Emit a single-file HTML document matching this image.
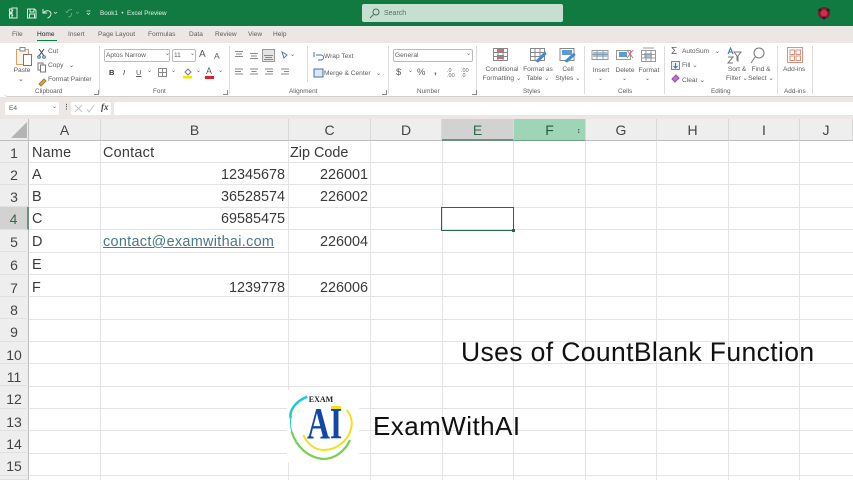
<!DOCTYPE html>
<html><head><meta charset="utf-8">
<style>
html,body{margin:0;padding:0;width:853px;height:480px;overflow:hidden;background:#fff}
body{position:relative;font-family:"Liberation Sans",sans-serif}
.a{position:absolute}
.t{position:absolute;white-space:nowrap;font-size:7px;line-height:9px;color:#5c5c5c}
.c{text-align:center}
.v{position:absolute;top:141px;bottom:0;width:1px;background:#e4e4e4}
.h{position:absolute;left:29px;right:0;height:1px;background:#e4e4e4}
.ch{position:absolute;top:119px;height:22px;line-height:22px;text-align:center;font-size:14px;color:#444;background:#eeeeee;border-right:1px solid #d8d8d8;box-sizing:border-box;border-bottom:1px solid #bdbdbd}
.rh{position:absolute;left:0;width:29px;text-align:center;font-size:14px;color:#444;background:#eeeeee;box-sizing:border-box;border-bottom:1px solid #e0e0e0;border-right:1px solid #bdbdbd;padding-top:1px}
.l{padding-top:2px}
.d{position:absolute;font-size:14.4px;line-height:22px;color:#3a3a3a;white-space:nowrap;margin-top:1px}
.r{text-align:right}
.sp{letter-spacing:.25px}
.sep{position:absolute;top:46px;height:48px;width:1px;background:#dedcda}
svg{position:absolute;overflow:visible}
</style></head><body>
<!-- title bar -->
<div class="a" style="left:0;top:0;width:853px;height:26px;background:#117a41"></div>
<div class="a" style="left:0;top:26px;width:853px;height:17px;background:#ece7e5"></div>
<div class="a" style="left:0;top:97px;width:853px;height:22px;background:#ece7e5"></div>
<svg style="left:0;top:0" width="110" height="26" fill="none" stroke="#dcefe4" stroke-width="1">
<rect x="9.500" y="9" width="7" height="9" fill="none"/><rect x="12" y="8" width="5" height="10" fill="#117a41"/><path d="M9 10l4 6M13 10l-4 6"/>
<path d="M27.500 9h7l1.500 1.500v7.500h-8.500zM30 9v3h4V9M29.500 18v-4h5v4"/>
<path d="M43 9v4h4M43.500 13c2-3 7-3 7.500 0.500 0 2.500-2 4-3.500 4.500"/>
<path d="M54 12l1.500 1.500L57 12" stroke-width=".7"/>
<path d="M72 9.500c-3 0-4.500 1-5 3l-1.500-1M68 17c3 0 4-2 3.500-4" opacity=".4"/>
<path d="M76 12l1.500 1.500L79 12" stroke-width=".7" opacity=".4"/>
<path d="M86.500 11h4M87 13l1.500 1.500L90 13" stroke-width=".8"/>
</svg>
<div class="t" style="left:100px;top:9px;color:#e4f1ea;font-size:6.300px">Book1 &nbsp;•&nbsp; Excel Preview</div>
<div class="a" style="left:362px;top:4px;width:201px;height:18px;background:#c6dfd1;border-radius:2px"></div>
<svg style="left:368px;top:7px" width="14" height="12" fill="none" stroke="#4b6f5b"><circle cx="8" cy="5" r="3"/><path d="M5.500 7.500L2 11"/></svg>
<div class="t" style="left:384px;top:9px;color:#54705f;font-size:7px">Search</div>
<svg style="left:816px;top:5px" width="16" height="16"><circle cx="8" cy="8" r="6" fill="#7d1a2f"/><circle cx="8" cy="8" r="3.500" fill="#d8284c"/><circle cx="4" cy="5" r="1.500" fill="#222"/><circle cx="12" cy="5" r="1.500" fill="#222"/><circle cx="8" cy="13" r="1.500" fill="#222"/></svg>
<!-- tabs -->
<div class="t" style="left:12px;top:30px;font-size:6.600px">File</div>
<div class="t" style="left:37px;top:30px;font-size:6.600px;color:#222">Home</div>
<div class="a" style="left:37px;top:40px;width:20px;height:1px;background:#117a41"></div>
<div class="t" style="left:68px;top:30px;font-size:6.600px">Insert</div>
<div class="t" style="left:98px;top:30px;font-size:6.600px">Page Layout</div>
<div class="t" style="left:148px;top:30px;font-size:6.600px">Formulas</div>
<div class="t" style="left:189px;top:30px;font-size:6.600px">Data</div>
<div class="t" style="left:215px;top:30px;font-size:6.600px">Review</div>
<div class="t" style="left:248px;top:30px;font-size:6.600px">View</div>
<div class="t" style="left:273px;top:30px;font-size:6.600px">Help</div>
<!-- ribbon -->
<div class="a" style="left:4px;top:43px;width:849px;height:54px;background:#fff;border-radius:4px 0 0 4px;border-bottom:1px solid #d2cfcd;box-sizing:border-box"></div>
<div class="sep" style="left:99px"></div><div class="sep" style="left:229px"></div><div class="sep" style="left:388px"></div><div class="sep" style="left:476px"></div><div class="sep" style="left:584px"></div><div class="sep" style="left:664px"></div><div class="sep" style="left:777px"></div><div class="sep" style="left:812px"></div>
<!-- clipboard -->
<svg style="left:14px;top:46px" width="20" height="22" fill="none"><rect x="2.500" y="3.500" width="12" height="15" stroke="#d9a066" fill="#fbf2e8"/><rect x="6" y="1.500" width="5" height="3.500" stroke="#888" fill="#fff"/><rect x="9.500" y="8.500" width="8" height="11" stroke="#777" fill="#fff"/></svg>
<div class="t c" style="left:12px;top:66px;width:20px;font-size:6.600px">Paste</div>
<div class="t" style="left:18px;top:75px">⌄</div>
<svg style="left:37px;top:47px" width="12" height="50" fill="none" stroke="#777"><path d="M2 2l5 7M7 2L2 9" stroke="#444"/><circle cx="2" cy="10" r="1.300" stroke="#3c6fb0"/><circle cx="7" cy="10" r="1.300" stroke="#3c6fb0"/><rect x="1" y="16" width="5" height="7"/><rect x="3.500" y="18" width="5" height="7" fill="#fff"/><path d="M2 37l5-5 2 2-5 5z" fill="#e0a04a" stroke="#a97c3a"/></svg>
<div class="t" style="left:48px;top:47px;font-size:6.600px">Cut</div>
<div class="t" style="left:48px;top:61px;font-size:6.600px">Copy &nbsp;&nbsp;⌄</div>
<div class="t" style="left:48px;top:75px;font-size:6.600px">Format Painter</div>
<div class="t" style="left:35px;top:87px;font-size:6.400px">Clipboard</div>
<div class="a" style="left:94px;top:90px;width:4px;height:4px;border:1px solid #888;border-width:0 1px 1px 0"></div>
<!-- font -->
<div class="a" style="left:104px;top:49px;width:66px;height:13px;border:1px solid #bbb;border-radius:2px;box-sizing:border-box"></div>
<div class="t" style="left:106px;top:51px;font-size:6.600px">Aptos Narrow</div>
<div class="t" style="left:165px;top:50px;font-size:6px">⌄</div>
<div class="a" style="left:172px;top:49px;width:24px;height:13px;border:1px solid #bbb;border-radius:2px;box-sizing:border-box"></div>
<div class="t" style="left:174px;top:51px;font-size:6.600px">11</div>
<div class="t" style="left:190px;top:50px;font-size:6px">⌄</div>
<div class="t" style="left:199px;top:49px;font-size:10px;line-height:12px">A</div><div class="t" style="left:214px;top:50px;font-size:8.500px;line-height:12px">A</div>
<div class="t" style="left:109px;top:68px;font-size:7.500px;font-weight:bold;color:#333">B</div>
<div class="t" style="left:123px;top:68px;font-size:7.500px;font-style:italic;color:#333">I</div>
<div class="t" style="left:136px;top:68px;font-size:7.500px;text-decoration:underline">U</div>
<div class="t" style="left:147px;top:67px;font-size:6px">⌄</div>
<svg style="left:158px;top:68px" width="10" height="10" fill="none" stroke="#888"><rect x=".5" y=".5" width="8" height="8"/><path d="M4.500 0v9M0 4.500h9"/></svg>
<div class="t" style="left:171px;top:67px;font-size:6px">⌄</div>
<svg style="left:183px;top:67px" width="10" height="12" fill="none"><path d="M2 5l3-3 3 3-3 3z" stroke="#777"/><rect x="0" y="9" width="9" height="2.500" fill="#ffe000"/></svg>
<div class="t" style="left:196px;top:67px;font-size:6px">⌄</div>
<div class="t" style="left:206px;top:66px;font-size:9px;line-height:10px">A</div><div class="a" style="left:205px;top:76px;width:9px;height:2.500px;background:#e0202a"></div>
<div class="t" style="left:218px;top:67px;font-size:6px">⌄</div>
<div class="t" style="left:153px;top:87px;font-size:6.400px">Font</div>
<div class="a" style="left:223px;top:90px;width:4px;height:4px;border:1px solid #888;border-width:0 1px 1px 0"></div>
<!-- alignment -->
<svg style="left:234px;top:49px" width="75" height="30" fill="none" stroke="#888" stroke-width="1">
<path d="M1 2.500h8M2 5h6M1 7.500h8M16 4.500h8M17 7h6M16 9.500h8"/>
<rect x="28.500" y="0.500" width="12" height="12" fill="#e4e4e4" stroke="#999"/><path d="M30 6.500h9M31 8.500h7M30 10.500h9"/>
<path d="M1 20h8M1 22.500h6M1 25h8M16 20h8M17.500 22.500h5M16 25h8M31 20h8M33 22.500h6M31 25h8M47 20h8M50 22.500h5M47 25h8" />
<path d="M48 3l5 3 -3 3z" stroke="#4a7ab5"/>
</svg>
<div class="t" style="left:290px;top:51px;font-size:6px">⌄</div>
<div class="a" style="left:307px;top:46px;width:1px;height:36px;background:#dedcda"></div>
<svg style="left:313px;top:51px" width="12" height="28" fill="none" stroke="#777"><path d="M1 1v5M3 4h5a2 2 0 010 5H5" stroke="#3c6fb0"/><rect x="1" y="18" width="9" height="8" stroke="#3c6fb0" fill="#dce8f5"/></svg>
<div class="t" style="left:324px;top:52px;font-size:6.600px">Wrap Text</div>
<div class="t" style="left:324px;top:69px;font-size:6.600px">Merge &amp; Center &nbsp;&nbsp;⌄</div>
<div class="t" style="left:289px;top:87px;font-size:6.400px">Alignment</div>
<div class="a" style="left:382px;top:90px;width:4px;height:4px;border:1px solid #888;border-width:0 1px 1px 0"></div>
<!-- number -->
<div class="a" style="left:393px;top:49px;width:80px;height:13px;border:1px solid #bbb;border-radius:2px;box-sizing:border-box"></div>
<div class="t" style="left:395px;top:51px;font-size:6.600px">General</div>
<div class="t" style="left:466px;top:50px;font-size:6px">⌄</div>
<div class="t" style="left:396px;top:67px;font-size:9.500px;line-height:11px">$</div>
<div class="t" style="left:408px;top:67px;font-size:6px">⌄</div>
<div class="t" style="left:417px;top:67px;font-size:9.500px;line-height:11px">%</div>
<div class="t" style="left:434px;top:66px;font-size:10px;line-height:11px;font-weight:bold">,</div>
<div class="t" style="left:447px;top:69px;font-size:5.500px;line-height:5px;color:#666">.0<br>.00</div>
<div class="t" style="left:461px;top:69px;font-size:5.500px;line-height:5px;color:#666">.00<br>.0</div>
<div class="t" style="left:417px;top:87px;font-size:6.400px">Number</div>
<div class="a" style="left:472px;top:90px;width:4px;height:4px;border:1px solid #888;border-width:0 1px 1px 0"></div>
<!-- styles -->
<svg style="left:493px;top:48px" width="85" height="16" fill="none" stroke="#888">
<rect x=".5" y=".5" width="14" height="12"/><rect x="4" y="1" width="7" height="4" fill="#e8606a" stroke="none"/><rect x="4" y="7" width="7" height="4" fill="#e8606a" stroke="none"/><path d="M.5 4.500h14M.5 8.500h14M5 .5v12M10 .5v12"/>
<rect x="37.500" y=".5" width="14" height="12"/><path d="M37.500 4.500h14M37.500 8.500h14M42 .5v12M47 .5v12"/><path d="M43 13l9-9 1 2-8 8z" fill="#4a8ad4" stroke="#4a8ad4"/>
<rect x="67" y=".5" width="14" height="12"/><rect x="69" y="2" width="10" height="5" fill="#5b9bd5" stroke="none"/><path d="M72 13l9-8 1 2-8 7z" fill="#4a8ad4" stroke="#4a8ad4"/>
</svg>
<div class="t c" style="left:480px;top:65px;width:44px;font-size:6.600px;line-height:9px">Conditional<br>Formatting ⌄</div>
<div class="t c" style="left:521px;top:65px;width:34px;font-size:6.600px;line-height:9px">Format as<br>Table ⌄</div>
<div class="t c" style="left:553px;top:65px;width:30px;font-size:6.600px;line-height:9px">Cell<br>Styles ⌄</div>
<div class="t" style="left:523px;top:87px;font-size:6.400px">Styles</div>
<!-- cells -->
<svg style="left:591px;top:47px" width="68" height="16" fill="none" stroke="#999">
<rect x="1" y="3.500" width="16" height="9"/><rect x="2" y="5" width="15" height="5" fill="#9cc3ea" stroke="none"/><path d="M1 7.500h16M6 3.500v9M12 3.500v9"/>
<rect x="25.500" y="3.500" width="14" height="9"/><rect x="28" y="5" width="8" height="5" fill="#5b9bd5" stroke="none"/><path d="M36 3l6 8M42 3l-6 8" stroke="#e0606a"/>
<rect x="50.500" y="3.500" width="14" height="11"/><rect x="53" y="6" width="8" height="5" fill="#9cc3ea" stroke="none"/><path d="M50.500 7.500h14M50.500 11h14M55 3.500v11M60 3.500v11M52 1h11"/>
</svg>
<div class="t c" style="left:590px;top:66px;width:22px;font-size:6.600px">Insert</div><div class="t" style="left:598px;top:75px;font-size:6px">⌄</div>
<div class="t c" style="left:614px;top:66px;width:22px;font-size:6.600px">Delete</div><div class="t" style="left:622px;top:75px;font-size:6px">⌄</div>
<div class="t c" style="left:637px;top:66px;width:24px;font-size:6.600px">Format</div><div class="t" style="left:645px;top:75px;font-size:6px">⌄</div>
<div class="t" style="left:618px;top:87px;font-size:6.400px">Cells</div>
<!-- editing -->
<div class="t" style="left:671px;top:46px;font-size:10px;line-height:11px">Σ</div>
<div class="t" style="left:682px;top:47px;font-size:6.600px">AutoSum &nbsp;&nbsp;⌄</div>
<svg style="left:671px;top:61px" width="12" height="26" fill="none"><rect x=".5" y=".5" width="8" height="8" stroke="#888" fill="#e8f1fa"/><path d="M4.500 2v5M2.500 5l2 2 2-2" stroke="#3c6fb0"/><path d="M1 18l4-4 3 3-4 4z" fill="#c56fd0" stroke="#9a4aa8"/></svg>
<div class="t" style="left:682px;top:61px;font-size:6.600px">Fill ⌄</div>
<div class="t" style="left:682px;top:76px;font-size:6.600px">Clear ⌄</div>
<svg style="left:727px;top:47px" width="45" height="18" fill="none" stroke="#777"><path d="M1 7l2.500-6L6 7M2 5h3" stroke="#3c6fb0"/><path d="M1 10h5l-5 6h5M7 5h7l-3 4v5l-1-1V9z"/><circle cx="32" cy="6" r="5"/><path d="M28 10l-4 6"/></svg>
<div class="t c" style="left:723px;top:65px;width:28px;font-size:6.600px;line-height:9px">Sort &amp;<br>Filter ⌄</div>
<div class="t c" style="left:747px;top:65px;width:28px;font-size:6.600px;line-height:9px">Find &amp;<br>Select ⌄</div>
<div class="t" style="left:711px;top:87px;font-size:6.400px">Editing</div>
<!-- addins -->
<svg style="left:787px;top:47px" width="17" height="17" fill="none" stroke="#d9937f"><rect x=".5" y=".5" width="15" height="15"/><rect x="3" y="3" width="4.500" height="4.500"/><rect x="9" y="3" width="4.500" height="4.500"/><rect x="3" y="9" width="4.500" height="4.500"/><rect x="9" y="9" width="4.500" height="4.500"/></svg>
<div class="t" style="left:783px;top:65px;font-size:6.600px">Add-ins</div>
<div class="t" style="left:784px;top:87px;font-size:6.400px">Add-ins</div>
<!-- formula bar -->
<div class="a" style="left:5px;top:102px;width:54px;height:13px;background:#fff;border-radius:2px"></div>
<div class="t" style="left:9px;top:104px;font-size:6.600px">E4</div>
<div class="t" style="left:52px;top:103px;font-size:6px">⌄</div>
<div class="t" style="left:63px;top:103px;font-size:7px;font-weight:bold">⋮</div>
<div class="a" style="left:71px;top:102px;width:40px;height:13px;background:#fff;border-radius:2px"></div>
<svg style="left:74px;top:104px" width="22" height="9" fill="none" stroke="#c4c4c4"><path d="M1 1l7 7M8 1L1 8M13 5l2 3 5-7"/></svg>
<div class="t" style="left:101px;top:103px;font-size:9px;font-family:'Liberation Serif',serif;font-style:italic;font-weight:bold;color:#444">fx</div>
<div class="a" style="left:114px;top:102px;width:739px;height:13px;background:#fff;border-radius:2px 0 0 2px"></div>
<!-- headers -->
<div class="a" style="left:0;top:119px;width:29px;height:22px;background:#eeeeee;border-right:1px solid #bdbdbd;border-bottom:1px solid #bdbdbd;box-sizing:border-box"></div>
<svg style="left:11px;top:122px" width="17" height="17"><path d="M16 0v16H0z" fill="#b4b4b4"/></svg>
<div class="ch" style="left:29px;width:72px">A</div>
<div class="ch" style="left:101px;width:188px">B</div>
<div class="ch" style="left:289px;width:82px">C</div>
<div class="ch" style="left:371px;width:71px">D</div>
<div class="ch" style="left:442px;width:72px;background:#d2d2d2;color:#2e6b4a;border-bottom:2px solid #6f8f7e">E</div>
<div class="ch" style="left:514px;width:72px;background:#9fd5b7;color:#245c3d;border-bottom:1px solid #6f9f85">F</div>
<div class="t" style="left:577px;top:127px;font-size:7px;font-weight:bold;color:#222">↕</div>
<div class="ch" style="left:586px;width:71px">G</div>
<div class="ch" style="left:657px;width:72px">H</div>
<div class="ch" style="left:729px;width:71px">I</div>
<div class="ch" style="left:800px;width:53px">J</div>
<div class="rh" style="top:141px;height:22px;line-height:22px">1</div>
<div class="rh" style="top:163px;height:22px;line-height:22px">2</div>
<div class="rh" style="top:185px;height:22px;line-height:22px">3</div>
<div class="rh" style="top:207px;height:23px;line-height:23px;background:#d2d2d2;color:#2e6b4a;border-right:2px solid #6f8f7e">4</div>
<div class="rh" style="top:230px;height:22px;line-height:22px">5</div>
<div class="rh l" style="top:252px;height:23px;line-height:23px">6</div>
<div class="rh l" style="top:275px;height:22px;line-height:22px">7</div>
<div class="rh l" style="top:297px;height:22px;line-height:22px">8</div>
<div class="rh l" style="top:319px;height:23px;line-height:23px">9</div>
<div class="rh l" style="top:342px;height:22px;line-height:22px">10</div>
<div class="rh l" style="top:364px;height:22px;line-height:22px">11</div>
<div class="rh l" style="top:386px;height:23px;line-height:23px">12</div>
<div class="rh l" style="top:409px;height:22px;line-height:22px">13</div>
<div class="rh l" style="top:431px;height:22px;line-height:22px">14</div>
<div class="rh l" style="top:453px;height:23px;line-height:23px">15</div>
<div class="rh" style="top:476px;height:4px;padding:0"></div>
<!-- grid -->
<div class="v" style="left:100px"></div><div class="v" style="left:288px"></div><div class="v" style="left:370px"></div><div class="v" style="left:442px"></div><div class="v" style="left:513px"></div><div class="v" style="left:585px"></div><div class="v" style="left:656px"></div><div class="v" style="left:728px"></div><div class="v" style="left:799px"></div>
<div class="h" style="top:162px"></div><div class="h" style="top:184px"></div><div class="h" style="top:207px"></div><div class="h" style="top:229px"></div><div class="h" style="top:252px"></div><div class="h" style="top:274px"></div><div class="h" style="top:296px"></div><div class="h" style="top:319px"></div><div class="h" style="top:341px"></div><div class="h" style="top:363px"></div><div class="h" style="top:386px"></div><div class="h" style="top:408px"></div><div class="h" style="top:430px"></div><div class="h" style="top:453px"></div><div class="h" style="top:475px"></div>
<!-- data -->
<div class="d sp" style="left:32px;top:141px">Name</div>
<div class="d sp" style="left:103px;top:141px">Contact</div>
<div class="d" style="left:290px;top:141px">Zip Code</div>
<div class="d" style="left:32px;top:163px">A</div>
<div class="d r" style="left:100px;width:185px;top:163px">12345678</div>
<div class="d r" style="left:289px;width:79px;top:163px">226001</div>
<div class="d" style="left:32px;top:185px">B</div>
<div class="d r" style="left:100px;width:185px;top:185px">36528574</div>
<div class="d r" style="left:289px;width:79px;top:185px">226002</div>
<div class="d" style="left:32px;top:207px">C</div>
<div class="d r" style="left:100px;width:185px;top:207px">69585475</div>
<div class="d" style="left:32px;top:230px">D</div>
<div class="d" style="left:103px;top:230px;color:#467886;text-decoration:underline;letter-spacing:.32px">contact@examwithai.com</div>
<div class="d r" style="left:289px;width:79px;top:230px">226004</div>
<div class="d" style="left:32px;top:253px">E</div>
<div class="d" style="left:32px;top:276px">F</div>
<div class="d r" style="left:100px;width:185px;top:276px">1239778</div>
<div class="d r" style="left:289px;width:79px;top:276px">226006</div>
<!-- selection -->
<div class="a" style="left:441px;top:207px;width:73px;height:24px;border:1.500px solid #1f6b45;box-sizing:border-box"></div>
<div class="a" style="left:512px;top:229px;width:3px;height:3px;background:#1f6b45"></div>
<!-- overlay -->
<div class="a" style="left:461px;top:338px;font-size:26.500px;line-height:28px;color:#111;white-space:nowrap;letter-spacing:.38px">Uses of CountBlank Function</div>
<div class="a" style="left:287px;top:390px;width:72px;height:72px;background:#fff"></div>
<svg style="left:287px;top:391px" width="72" height="72" fill="none">
<path d="M20.300 5.700C8 10.500 2 20 3.700 27.300" stroke="#22c7d2" stroke-width="2.500"/>
<path d="M3.700 27.300C3 33 4 39 5.700 44" stroke="#22c7d2" stroke-width="1"/>
<path d="M4.700 40.700C9 56 22 67 36.300 68 48 68 58 60 63 49" stroke="#7ad04f" stroke-width="2.200"/>
<path d="M59.700 19C64 24 65 30 64.700 34 63 49 50 59 36.300 59 27 59 20 52 16.300 44" stroke="#f5df1c" stroke-width="2"/>
<text x="34" y="11" text-anchor="middle" font-family="Liberation Serif,serif" font-weight="bold" font-size="8" fill="#222">EXAM</text>
<text transform="translate(20 47) scale(.72 1)" font-family="Liberation Serif,serif" font-weight="bold" font-size="44" fill="#1347a5">AI</text>
<rect x="44" y="15" width="10" height="3" fill="#f5df1c"/>
</svg>
<div class="a" style="left:373px;top:411px;font-size:26px;line-height:30px;color:#111;white-space:nowrap;letter-spacing:.45px">ExamWithAI</div>
</body></html>
